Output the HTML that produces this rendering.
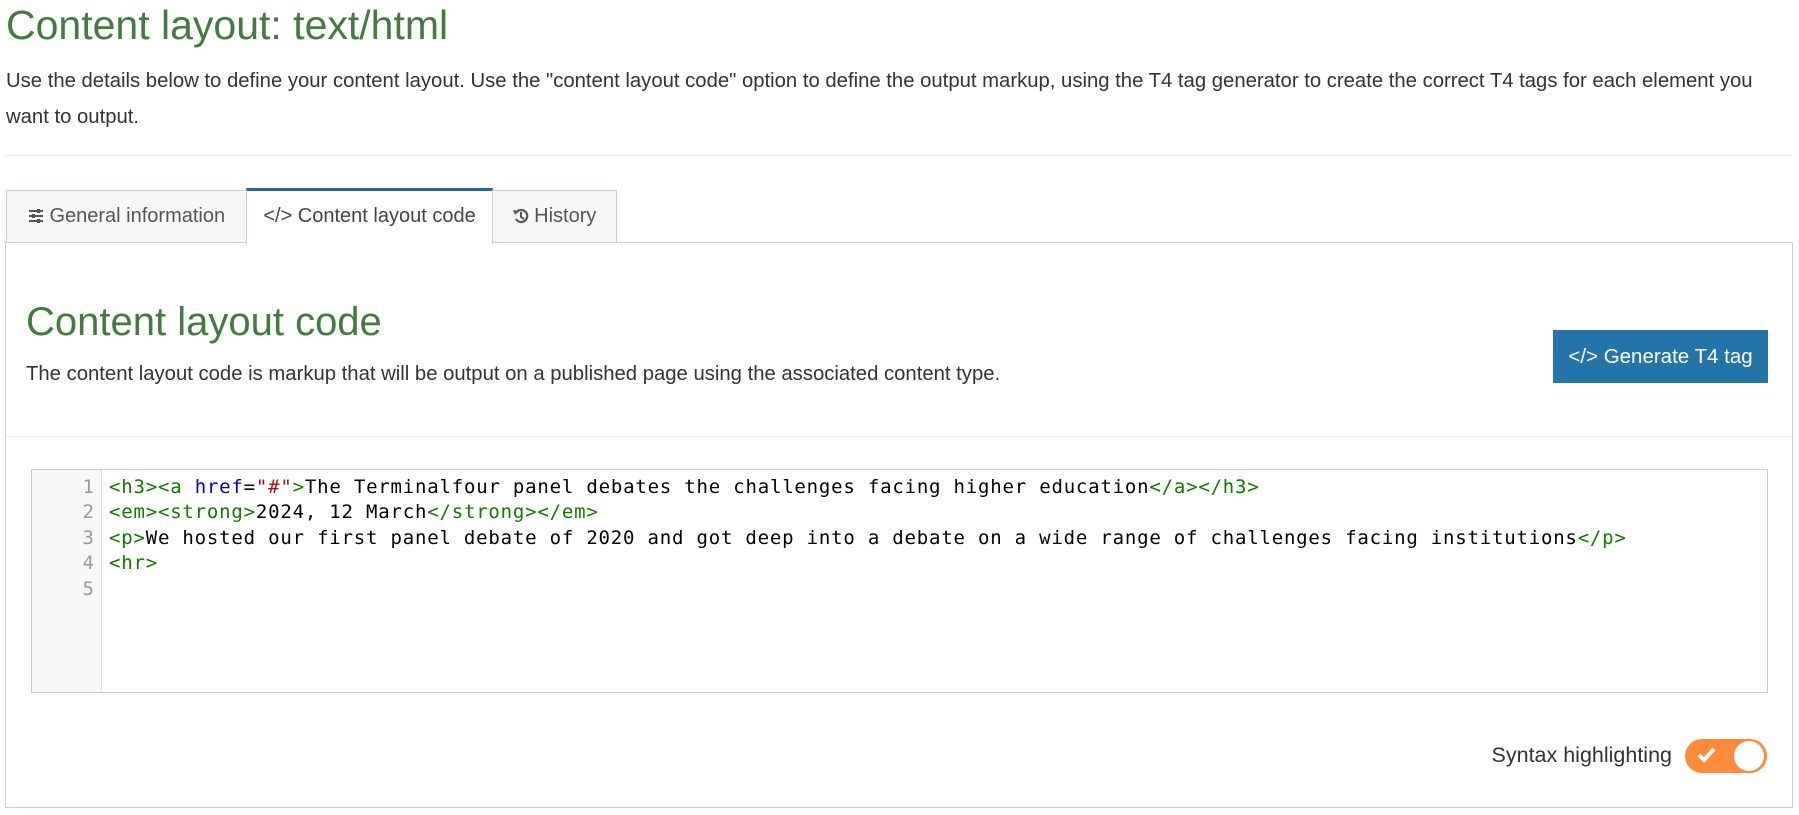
<!DOCTYPE html>
<html><head><meta charset="utf-8"><style>
body{margin:0;width:1799px;height:815px;background:#fff;font-family:"Liberation Sans",sans-serif;color:#333;overflow:hidden;position:relative}
.a{position:absolute}
h1{position:absolute;left:6px;top:0;margin:0;font-weight:normal;font-size:41px;color:#447a3f;line-height:50px}
.p{left:6px;top:64px;font-size:20.3px;line-height:35.5px;width:1775px}
.hr{left:6px;top:155px;width:1786px;height:1px;background:#e6e6e6}
.tab{top:190px;height:52px;border:1px solid #c5d0dc;border-bottom:none;background:#f7f7f7;box-sizing:border-box;font-size:20px;line-height:50px;color:#555;text-align:center;white-space:nowrap}
.panel{left:5px;top:242px;width:1788px;height:566px;border:1px solid #c5d0dc;box-sizing:border-box}
.code{font-family:"DejaVu Sans Mono","Liberation Mono",monospace;font-size:19px;letter-spacing:0.8px;line-height:25.4px;white-space:pre;color:#000}
.t{color:#170}.at{color:#00c}.s{color:#a11}
</style></head><body>
<h1>Content layout: text/html</h1>
<div class="a p">Use the details below to define your content layout. Use the "content layout code" option to define the output markup, using the T4 tag generator to create the correct T4 tags for each element you want to output.</div>
<div class="a hr"></div>
<div class="a panel"></div>
<div class="a tab" style="left:6px;width:241px">
<svg width="16" height="14" viewBox="0 0 16 14" style="vertical-align:-1px"><g stroke="#555" stroke-width="2"><path d="M1 2h14M1 7h14M1 12h14"/></g><g fill="#555"><rect x="9" y="0" width="3" height="4"/><rect x="4" y="5" width="3" height="4"/><rect x="9" y="10" width="3" height="4"/></g></svg> General information</div>
<div class="a tab" style="left:246px;top:188px;height:56px;width:247px;background:#fff;border-top:3px solid #2f6295;line-height:50px;color:#444">&lt;/&gt; Content layout code</div>
<div class="a tab" style="left:492px;width:125px">
<svg width="16" height="16" viewBox="0 0 16 16" style="vertical-align:-2px"><path d="M3 5A6 6 0 1 1 3 11" fill="none" stroke="#555" stroke-width="2.2"/><path d="M0 2l5 1-3 4z" fill="#555"/><path d="M8 4v5l3 2" fill="none" stroke="#555" stroke-width="2"/></svg> History</div>
<div class="a" style="left:26px;top:298px;font-size:40px;color:#447a3f;line-height:48px">Content layout code</div>
<div class="a" style="left:26px;top:362px;font-size:20.3px;line-height:24px">The content layout code is markup that will be output on a published page using the associated content type.</div>
<div class="a" style="left:1553px;top:330px;width:215px;height:53px;background:#2574a9;color:#fff;font-size:20.5px;line-height:53px;text-align:center">&lt;/&gt; Generate T4 tag</div>
<div class="a" style="left:6px;top:436px;width:1786px;height:1px;background:#ececec"></div>
<div class="a" style="left:31px;top:469px;width:1737px;height:224px;border:1px solid #ccc;box-sizing:border-box"></div>
<div class="a" style="left:32px;top:470px;width:69px;height:222px;background:#f7f7f7;border-right:1px solid #ddd"></div>
<div class="a code" style="left:32px;top:475px;width:62px;text-align:right;color:#999;letter-spacing:0">1
2
3
4
5</div>
<div class="a code" style="left:109px;top:475px"><span class="t">&lt;h3&gt;&lt;a </span><span class="at">href</span>=<span class="s">"#"</span><span class="t">&gt;</span>The Terminalfour panel debates the challenges facing higher education<span class="t">&lt;/a&gt;&lt;/h3&gt;</span>
<span class="t">&lt;em&gt;&lt;strong&gt;</span>2024, 12 March<span class="t">&lt;/strong&gt;&lt;/em&gt;</span>
<span class="t">&lt;p&gt;</span>We hosted our first panel debate of 2020 and got deep into a debate on a wide range of challenges facing institutions<span class="t">&lt;/p&gt;</span>
<span class="t">&lt;hr&gt;</span>
</div>
<div class="a" style="left:1300px;top:742px;width:372px;text-align:right;font-size:21.5px;line-height:26px">Syntax highlighting</div>
<div class="a" style="left:1685px;top:739px;width:82px;height:34px;border-radius:17px;background:#fd8a3b"></div>
<div class="a" style="left:1734px;top:741px;width:30px;height:30px;border-radius:50%;background:#fff"></div>
<svg class="a" style="left:1696px;top:746px" width="22" height="18" viewBox="0 0 22 18"><path d="M3 9l5 5 10-11" fill="none" stroke="#fff" stroke-width="4"/></svg>
</body></html>
